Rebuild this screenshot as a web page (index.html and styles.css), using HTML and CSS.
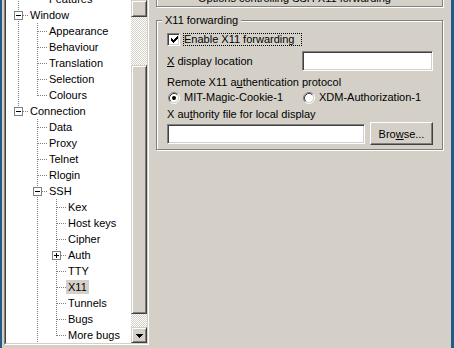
FILE: index.html
```html
<!DOCTYPE html>
<html lang="en">
  <head>
    <meta charset="UTF-8" />
    <meta name="viewport" content="width=device-width, initial-scale=1.0" />
    <title>PuTTY Configuration - X11</title>
    <link rel="stylesheet" href="styles.css">
  </head>
  <body>
    <div class="dialog">
      <!-- Category tree -->
      <div class="tree">
        <div class="tree-inner">
          <div class="tree-items">
            <div class="tree-list">
              <div class="row"><span class="g v"></span><span class="c last"></span><span class="label">Features</span></div>
              <div class="row"><span class="c"><span class="exp"></span></span><span class="label">Window</span></div>
              <div class="row"><span class="g v"></span><span class="c"></span><span class="label">Appearance</span></div>
              <div class="row"><span class="g v"></span><span class="c"></span><span class="label">Behaviour</span></div>
              <div class="row"><span class="g v"></span><span class="c"></span><span class="label">Translation</span></div>
              <div class="row"><span class="g v"></span><span class="c"></span><span class="label">Selection</span></div>
              <div class="row"><span class="g v"></span><span class="c last"></span><span class="label">Colours</span></div>
              <div class="row"><span class="c last"><span class="exp"></span></span><span class="label">Connection</span></div>
              <div class="row"><span class="g"></span><span class="c"></span><span class="label">Data</span></div>
              <div class="row"><span class="g"></span><span class="c"></span><span class="label">Proxy</span></div>
              <div class="row"><span class="g"></span><span class="c"></span><span class="label">Telnet</span></div>
              <div class="row"><span class="g"></span><span class="c"></span><span class="label">Rlogin</span></div>
              <div class="row"><span class="g"></span><span class="c"><span class="exp"></span></span><span class="label">SSH</span></div>
              <div class="row"><span class="g"></span><span class="g v"></span><span class="c"></span><span class="label">Kex</span></div>
              <div class="row"><span class="g"></span><span class="g v"></span><span class="c"></span><span class="label">Host keys</span></div>
              <div class="row"><span class="g"></span><span class="g v"></span><span class="c"></span><span class="label">Cipher</span></div>
              <div class="row"><span class="g"></span><span class="g v"></span><span class="c"><span class="exp plus"></span></span><span class="label">Auth</span></div>
              <div class="row"><span class="g"></span><span class="g v"></span><span class="c"></span><span class="label">TTY</span></div>
              <div class="row"><span class="g"></span><span class="g v"></span><span class="c"></span><span class="label selected">X11</span></div>
              <div class="row"><span class="g"></span><span class="g v"></span><span class="c"></span><span class="label">Tunnels</span></div>
              <div class="row"><span class="g"></span><span class="g v"></span><span class="c"></span><span class="label">Bugs</span></div>
              <div class="row"><span class="g"></span><span class="g v"></span><span class="c last"></span><span class="label">More bugs</span></div>
            </div>
          </div>

          <div class="scrollbar">
            <div class="sb-btn sb-up"></div>
            <div class="sb-track track-top"></div>
            <div class="sb-btn sb-thumb"></div>
            <div class="sb-track track-bottom"></div>
            <div class="sb-btn sb-down">
              <svg width="7" height="4" viewBox="0 0 7 4" shape-rendering="crispEdges"><path d="M0 0h7v1h-1v1h-1v1h-1v1h-1v-1h-1v-1h-1v-1h-1z" fill="#000"/></svg>
            </div>
          </div>
        </div>
      </div>

      <!-- X11 panel -->
      <div class="panel">
        <div class="panel-title">Options controlling SSH X11 forwarding</div>

        <fieldset class="group">
          <legend>X11 forwarding</legend>

          <div class="check-row">
            <span class="checkbox">
              <svg width="9" height="9" viewBox="0 0 9 9" shape-rendering="crispEdges"><path d="M1 3h1v3h-1zM2 4h1v3h-1zM3 5h1v3h-1zM4 4h1v3h-1zM5 3h1v3h-1zM6 2h1v3h-1zM7 1h1v3h-1z" fill="#000"/></svg>
            </span>
            <span class="check-label">Enable X11 forwarding</span>
          </div>

          <div class="field-row">
            <span><u>X</u> display location</span>
            <input class="textbox display-box" type="text" value="" />
          </div>

          <div class="line">Remote X11 a<u>u</u>thentication protocol</div>

          <div class="radio-row">
            <span class="radio-item">
              <svg class="radio" width="12" height="12" viewBox="0 0 12 12">
                <circle cx="6" cy="6" r="4.2" fill="#fff"/>
                <path d="M2.11 9.89A5.5 5.5 0 0 1 9.89 2.11" fill="none" stroke="#808080"/>
                <path d="M9.89 2.11A5.5 5.5 0 0 1 2.11 9.89" fill="none" stroke="#fff"/>
                <path d="M2.82 9.18A4.5 4.5 0 0 1 9.18 2.82" fill="none" stroke="#404040"/>
                <path d="M9.18 2.82A4.5 4.5 0 0 1 2.82 9.18" fill="none" stroke="#d4d0c8"/>
                <circle cx="6" cy="6" r="2" fill="#000"/>
              </svg>
              MIT-Magic-Cookie-1
            </span>
            <span class="radio-item">
              <svg class="radio" width="12" height="12" viewBox="0 0 12 12">
                <circle cx="6" cy="6" r="4.2" fill="#fff"/>
                <path d="M2.11 9.89A5.5 5.5 0 0 1 9.89 2.11" fill="none" stroke="#808080"/>
                <path d="M9.89 2.11A5.5 5.5 0 0 1 2.11 9.89" fill="none" stroke="#fff"/>
                <path d="M2.82 9.18A4.5 4.5 0 0 1 9.18 2.82" fill="none" stroke="#404040"/>
                <path d="M9.18 2.82A4.5 4.5 0 0 1 2.82 9.18" fill="none" stroke="#d4d0c8"/>
              </svg>
              XDM-Authorization-1
            </span>
          </div>

          <div class="line auth-line">X au<u>t</u>hority file for local display</div>

          <div class="file-row">
            <input class="textbox file-box" type="text" value="" />
            <button class="btn" type="button">Bro<u>w</u>se...</button>
          </div>
        </fieldset>
      </div>
    </div>
  </body>
</html>
```

FILE: styles.css
```css
body {
  margin: 0;
  width: 449px;
  height: 348px;
  overflow: hidden;
  background: #d4d0c8;
  border-left: 2px solid #245a86;
  border-right: 3px solid #245a86;
  font-family: "Liberation Sans", Arial, sans-serif;
  font-size: 11px;
  color: #000;
}

.dialog {
  display: flex;
  align-items: flex-start;
}

/* Tree view */
.tree {
  margin: -2px 0 0 2px;
  border: 1px solid;
  border-color: #808080 #fff #fff #808080;
}

.tree-inner {
  display: flex;
  width: 141px;
  height: 343px;
  border: 1px solid;
  border-color: #404040 #d4d0c8 #d4d0c8 #404040;
  background: #fff;
}

.tree-items {
  flex: 1;
  overflow: hidden;
}

.tree-list {
  margin-top: -9px;
}

.row {
  display: flex;
  height: 16px;
  white-space: nowrap;
}

.g {
  flex: none;
  width: 19px;
}

.g.v {
  background: repeating-linear-gradient(to bottom, #808080 0 1px, transparent 1px 2px) 12px 0 / 1px 100% no-repeat;
}

.c {
  flex: none;
  display: flex;
  width: 22px;
  background:
    repeating-linear-gradient(to bottom, #808080 0 1px, transparent 1px 2px) 12px 0 / 1px 100% no-repeat,
    repeating-linear-gradient(to right, #808080 0 1px, transparent 1px 2px) 13px 8px / 9px 1px no-repeat;
}

.c.last {
  background:
    repeating-linear-gradient(to bottom, #808080 0 1px, transparent 1px 2px) 12px 0 / 1px 9px no-repeat,
    repeating-linear-gradient(to right, #808080 0 1px, transparent 1px 2px) 13px 8px / 9px 1px no-repeat;
}

.exp {
  box-sizing: border-box;
  width: 9px;
  height: 9px;
  margin: 4px 0 0 8px;
  border: 1px solid #808080;
  background: #fff linear-gradient(#000, #000) center / 5px 1px no-repeat;
}

.exp.plus {
  background:
    linear-gradient(#000, #000) center / 5px 1px no-repeat,
    linear-gradient(#000, #000) center / 1px 5px no-repeat,
    #fff;
}

.label {
  align-self: center;
  padding: 0 2px;
  line-height: 14px;
}

.label.selected {
  background: #d4d0c8;
}

/* Scrollbar */
.scrollbar {
  display: flex;
  flex-direction: column;
  width: 16px;
}

.sb-btn {
  box-sizing: border-box;
  display: flex;
  align-items: center;
  justify-content: center;
  border: 1px solid;
  border-color: #d4d0c8 #404040 #404040 #d4d0c8;
  box-shadow: inset 1px 1px 0 #fff, inset -1px -1px 0 #808080;
  background: #d4d0c8;
}

.sb-up {
  height: 17px;
}

.sb-thumb {
  height: 249px;
}

.sb-down {
  height: 16px;
  padding-top: 1px;
}

.sb-track {
  background: repeating-conic-gradient(#fff 0 25%, #d4d0c8 0 50%) 0 0 / 2px 2px;
}

.track-top {
  height: 48px;
}

.track-bottom {
  height: 13px;
}

/* Right-hand panel */
.panel {
  width: 287px;
  margin: -12px 0 0 7px;
}

.panel-title {
  padding: 3px 10px 1px 0;
  line-height: 13px;
  text-align: center;
  border: 1px solid #808080;
  box-shadow: inset 1px 1px 0 #fff, 1px 1px 0 #fff;
}

.group {
  margin: 7px 0 0;
  padding: 6px 9px 4px 10px;
  min-width: 0;
  border: 1px solid #808080;
  box-shadow: inset 1px 1px 0 #fff, 1px 1px 0 #fff;
}

.group legend {
  margin-left: -5px;
  padding: 0 3px;
  line-height: 13px;
  background: #d4d0c8;
}

.check-row {
  display: flex;
  align-items: center;
  height: 13px;
}

.checkbox {
  box-sizing: border-box;
  width: 13px;
  height: 13px;
  padding: 1px;
  border: 1px solid;
  border-color: #808080 #fff #fff #808080;
  box-shadow: inset 1px 1px 0 #404040, inset -1px -1px 0 #d4d0c8;
  background: #fff;
}

.checkbox svg {
  display: block;
  margin: 0 0 0 1px;
}

.check-label {
  box-sizing: border-box;
  width: 119px;
  height: 13px;
  margin-left: 3px;
  line-height: 11px;
  border: 1px dotted #000;
}

.field-row {
  display: flex;
  align-items: center;
  justify-content: space-between;
  height: 20px;
  margin-top: 5px;
}

.textbox {
  box-sizing: border-box;
  height: 20px;
  margin: 0;
  padding: 0 2px;
  border: 1px solid;
  border-color: #808080 #fff #fff #808080;
  box-shadow: inset 1px 1px 0 #404040, inset -1px -1px 0 #d4d0c8;
  background: #fff;
  font: inherit;
  outline: none;
}

.display-box {
  width: 131px;
}

.line {
  margin-top: 5px;
  line-height: 13px;
}

.auth-line {
  margin-top: 4px;
}

.radio-row {
  display: grid;
  grid-template-columns: 135px 1fr;
  height: 13px;
  margin-top: 2px;
  padding-left: 1px;
  line-height: 13px;
}

.radio-item {
  display: flex;
  align-items: center;
  gap: 4px;
}

.radio {
  flex: none;
}

.file-row {
  display: flex;
  align-items: center;
  gap: 5px;
  height: 23px;
  margin-top: 1px;
}

.file-box {
  width: 198px;
}

.btn {
  box-sizing: border-box;
  width: 63px;
  height: 23px;
  padding: 0;
  border: 1px solid;
  border-color: #fff #404040 #404040 #fff;
  box-shadow: inset -1px -1px 0 #808080;
  background: #d4d0c8;
  font: inherit;
  color: #000;
}
```
